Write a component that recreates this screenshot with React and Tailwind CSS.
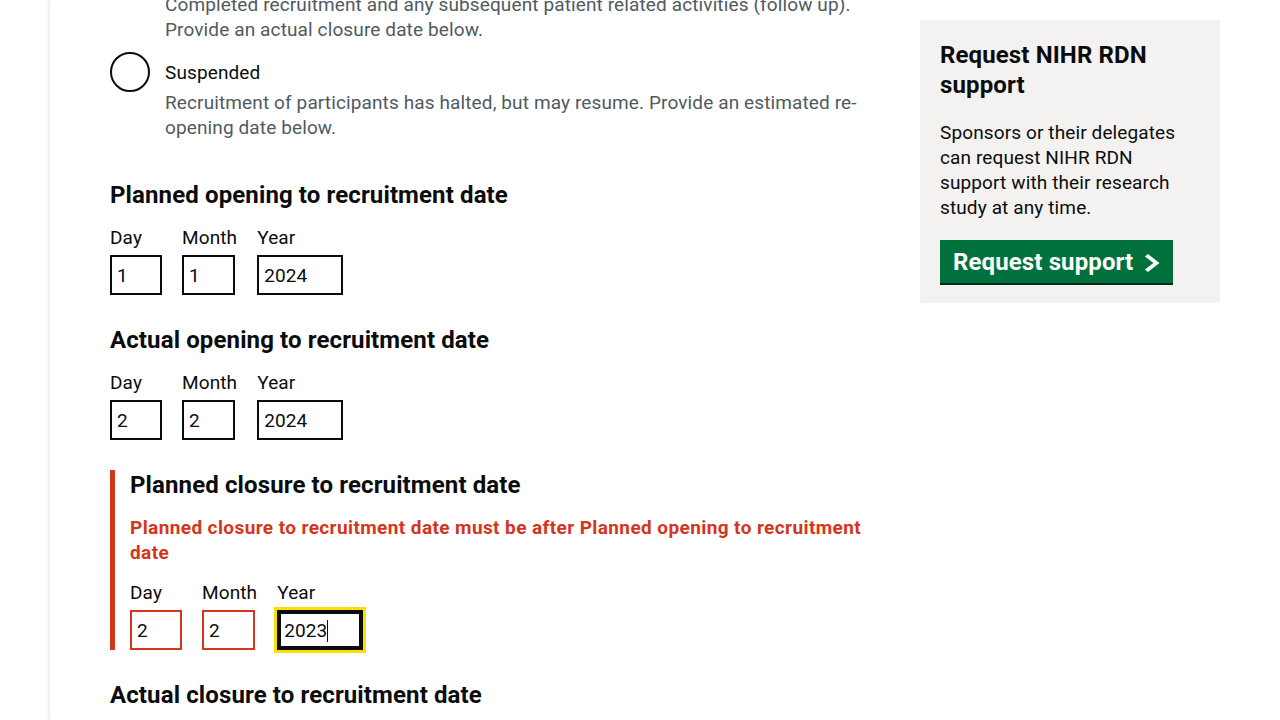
import React from "react";

const font = { fontFamily: "Roboto, 'Noto Sans', Arial, sans-serif", letterSpacing: "0.12px" };

function DateField({ label, value, width, error, focused }) {
  return (
    <div className="flex flex-col">
      <label className="text-[19px] leading-[25px] text-[#0b0c0c] mb-[5px]">{label}</label>
      {focused ? (
        <div
          className="h-[40px] border-2 border-[#0b0c0c] shadow-[inset_0_0_0_2px_#0b0c0c] outline-[3px] outline-solid outline-[#ffdd00] px-[5px] pt-[2px] flex items-center text-[19px] text-[#0b0c0c]"
          style={{ width }}
        >
          <span>{value}</span>
          <span className="inline-block w-px h-[22px] bg-[#0b0c0c]" />
        </div>
      ) : (
        <div
          className={
            "h-[40px] border-2 px-[5px] pt-[2px] flex items-center text-[19px] text-[#0b0c0c] " +
            (error ? "border-[#d4351c]" : "border-[#0b0c0c]")
          }
          style={{ width }}
        >
          {value}
        </div>
      )}
    </div>
  );
}

function DateInput({ d, m, y, error, focusYear }) {
  return (
    <div className="flex gap-5 items-start">
      <DateField label="Day" value={d} width={52} error={error} />
      <DateField label="Month" value={m} width={53} error={error} />
      <DateField label="Year" value={y} width={86} error={error && !focusYear} focused={focusYear} />
    </div>
  );
}

export default function App() {
  return (
    <div className="w-[1280px] h-[720px] overflow-hidden bg-white" style={font}>
      <div className="flex h-full">
        <div className="w-[50px] shrink-0 bg-white" />
        <div className="flex-1 h-full bg-white shadow-[-1px_0_3px_rgba(0,0,0,0.12)] pl-[60px] pr-[60px] flex gap-[42px]">
          <main className="w-[768px] shrink-0 text-[#0b0c0c]">
            <div className="-mt-[8px]">
              <p className="pl-[55px] text-[19px] leading-[25px] text-[#505a5f]">
                Completed recruitment and any subsequent patient related activities (follow up).
                <br />
                Provide an actual closure date below.
              </p>
              <div className="mt-[10px] flex">
                <div className="w-[40px] h-[40px] rounded-full border-2 border-[#0b0c0c] shrink-0" />
                <div className="pl-[15px] pr-[10px]">
                  <div className="pt-[8px] pb-[5px] text-[19px] leading-[25px]">Suspended</div>
                  <p className="text-[19px] leading-[25px] text-[#505a5f]">
                    Recruitment of participants has halted, but may resume. Provide an estimated re-opening date below.
                  </p>
                </div>
              </div>
            </div>

            <h2 className="mt-[40px] text-[24px] leading-[30px] font-bold">Planned opening to recruitment date</h2>
            <div className="mt-[15px]">
              <DateInput d="1" m="1" y="2024" />
            </div>

            <h2 className="mt-[30px] text-[24px] leading-[30px] font-bold">Actual opening to recruitment date</h2>
            <div className="mt-[15px]">
              <DateInput d="2" m="2" y="2024" />
            </div>

            <div className="mt-[30px] border-l-[5px] border-[#d4351c] pl-[15px]">
              <h2 className="text-[24px] leading-[30px] font-bold">Planned closure to recruitment date</h2>
              <p className="mt-[15px] text-[19px] leading-[25px] font-bold tracking-[0.4px] text-[#d4351c]">
                Planned closure to recruitment date must be after Planned opening to recruitment date
              </p>
              <div className="mt-[15px]">
                <DateInput d="2" m="2" y="2023" error focusYear />
              </div>
            </div>

            <h2 className="mt-[30px] text-[24px] leading-[30px] font-bold">Actual closure to recruitment date</h2>
          </main>

          <aside className="w-[300px] shrink-0 mt-[20px] self-start bg-[#f3f2f1] p-[20px] text-[#0b0c0c]">
            <h2 className="text-[24px] leading-[30px] font-bold">Request NIHR RDN support</h2>
            <p className="mt-[20px] text-[19px] leading-[25px]">
              Sponsors or their delegates can request NIHR RDN support with their research study at any time.
            </p>
            <div className="mt-[20px]">
              <a className="inline-flex items-center h-[43px] bg-[#00703c] shadow-[0_2px_0_#002d18] pl-[13px] pr-[13px] text-white font-bold text-[24px] leading-[30px]">
                Request support
                <svg className="ml-[12px] mt-[2px]" width="15" height="18" viewBox="0 0 15 18" aria-hidden="true">
                  <path d="M0 2.6 L2.9 0 L14.5 9 L2.9 18 L0 15.4 L8.4 9 Z" fill="white" />
                </svg>
              </a>
            </div>
          </aside>
        </div>
      </div>
    </div>
  );
}
